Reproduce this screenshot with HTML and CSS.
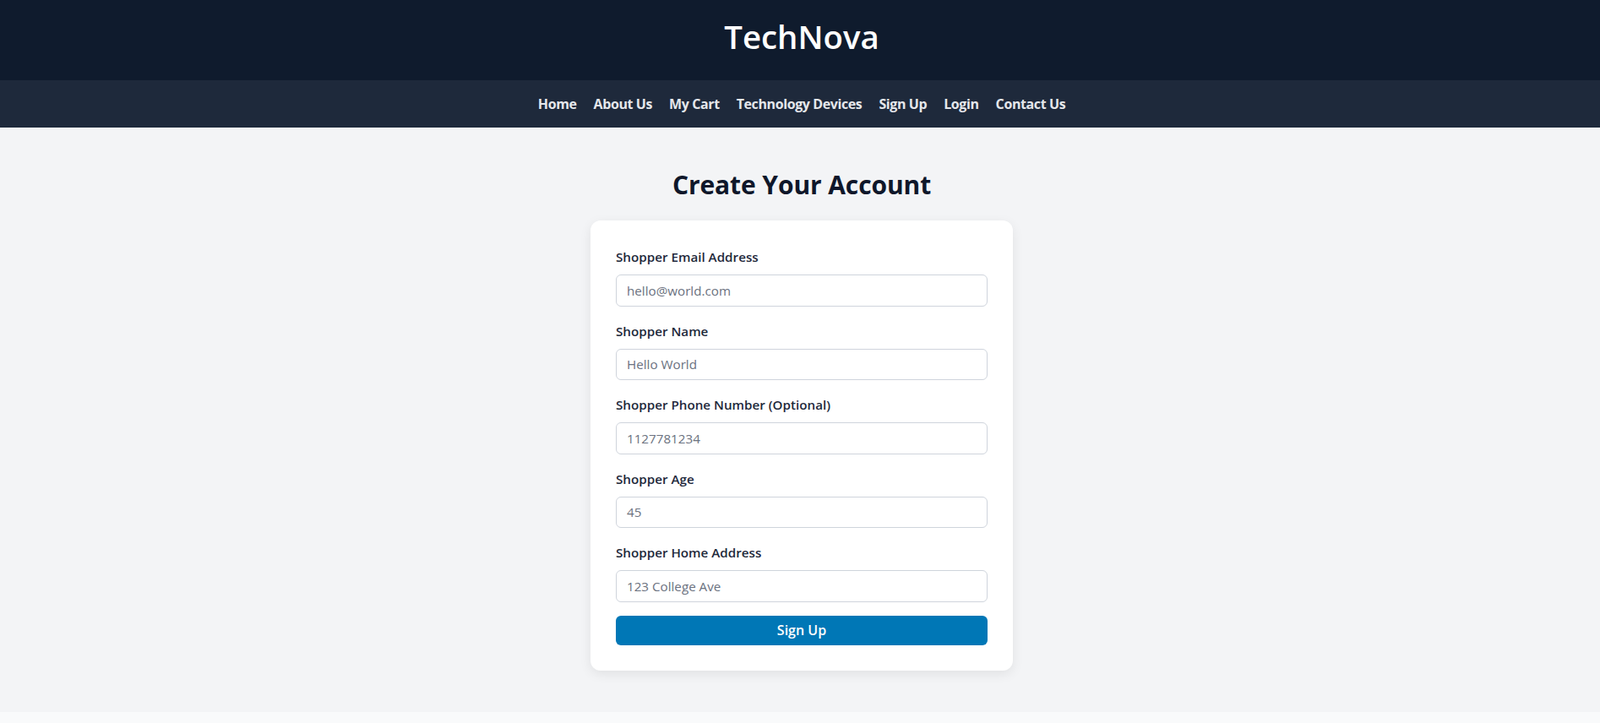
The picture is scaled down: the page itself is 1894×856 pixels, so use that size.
FILE: index.html
```html
<!DOCTYPE html>
<html lang="en">
<head>
<meta charset="utf-8">
<title>TechNova - Sign Up</title>
<link rel="stylesheet" href="styles.css">
</head>
<body>
<header class="site-header">
  <h1 class="brand">TechNova</h1>
</header>
<nav class="site-nav">
  <a href="#">Home</a>
  <a href="#">About Us</a>
  <a href="#">My Cart</a>
  <a href="#">Technology Devices</a>
  <a href="#">Sign Up</a>
  <a href="#">Login</a>
  <a href="#">Contact Us</a>
</nav>
<main class="main">
  <h2 class="page-title">Create Your Account</h2>
  <form class="card">
    <div class="field">
      <label class="label" for="email">Shopper Email Address</label>
      <input class="input" id="email" type="text" placeholder="hello@world.com">
    </div>
    <div class="field">
      <label class="label" for="name">Shopper Name</label>
      <input class="input" id="name" type="text" placeholder="Hello World">
    </div>
    <div class="field">
      <label class="label" for="phone">Shopper Phone Number (Optional)</label>
      <input class="input" id="phone" type="text" placeholder="1127781234">
    </div>
    <div class="field">
      <label class="label" for="age">Shopper Age</label>
      <input class="input" id="age" type="text" placeholder="45">
    </div>
    <div class="field">
      <label class="label" for="addr">Shopper Home Address</label>
      <input class="input" id="addr" type="text" placeholder="123 College Ave">
    </div>
    <button class="btn" type="button">Sign Up</button>
  </form>
</main>
<footer class="site-footer"></footer>
</body>
</html>
```
FILE: styles.css
```css
* { box-sizing: border-box; }
html, body { margin: 0; padding: 0; }
body {
  font-family: "Open Sans", "Noto Sans", sans-serif;
  background: #f3f4f6;
  color: #0f172a;
}
.site-header {
  background: #0f1b2d;
  height: 95px;
  padding: 0 0 8px 4px;
  display: flex;
  align-items: center;
  justify-content: center;
}
.brand {
  margin: 0;
  color: #ffffff;
  font-size: 38.4px;
  font-weight: 600;
  line-height: 1;
}
.site-nav {
  background: #1e293b;
  height: 56px;
  padding-left: 4px;
  display: flex;
  align-items: center;
  justify-content: center;
  gap: 20px;
}
.site-nav a {
  color: #e5e7eb;
  text-decoration: none;
  font-size: 16px;
  font-weight: 700;
  letter-spacing: -0.4px;
}
.main {
  padding: 48px 0 49px 4px;
  display: flex;
  flex-direction: column;
  align-items: center;
}
.page-title {
  margin: 0 0 22px;
  font-size: 30px;
  line-height: 40px;
  font-weight: 700;
  color: #0f172a;
  letter-spacing: -0.1px;
}
.card {
  width: 500px;
  background: #ffffff;
  border-radius: 12px;
  padding: 31px 30px 30px;
  box-shadow: 0 4px 14px rgba(0, 0, 0, 0.08);
}
.field { margin-bottom: 17px; }
.field:last-of-type { margin-bottom: 16px; }
.label {
  display: block;
  font-size: 15.2px;
  line-height: 24px;
  font-weight: 600;
  color: #1e293b;
  margin-bottom: 9px;
}
.input {
  display: block;
  width: 100%;
  height: 37.5px;
  border: 1px solid #cfd4dc;
  border-radius: 6px;
  padding: 0 12px;
  font-family: inherit;
  font-size: 15.2px;
  color: #374151;
  background: #fff;
  outline: none;
}
.input::placeholder { color: #6b7280; opacity: 1; }
.btn {
  display: block;
  width: 100%;
  height: 35.7px;
  border: none;
  border-radius: 6px;
  background: #0077b6;
  color: #ffffff;
  font-family: inherit;
  font-size: 16px;
  font-weight: 600;
  cursor: pointer;
}
.site-footer {
  background: #f9fafb;
  height: 40px;
}
```
